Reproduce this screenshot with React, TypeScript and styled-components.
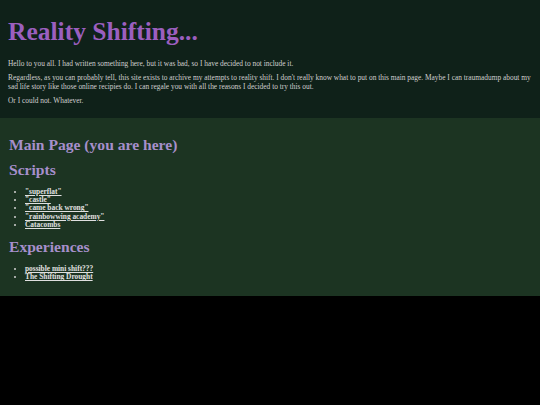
import React from 'react'
import styled, { createGlobalStyle } from 'styled-components'

const GlobalStyle = createGlobalStyle`
  html, body {
    margin: 0;
    padding: 0;
    background: #000;
  }
  body {
    font-family: 'Liberation Serif', 'Times New Roman', serif;
  }
`

const Header = styled.header`
  background: #0f2119;
  padding: 17px 8px 8px;
`

const Title = styled.h1`
  margin: 0 0 12px;
  font-size: 25.5px;
  line-height: 30px;
  font-weight: bold;
  color: #9b5fbf;
`

const Para = styled.p`
  margin: 0 0 5px;
  font-size: 7.4px;
  line-height: 9px;
  color: #cfcfcf;
`

const Main = styled.main`
  background: #1c3422;
  padding: 18px 9px 15px;
`

const Heading = styled.h2<{ $space?: number }>`
  margin: 0 0 ${(p) => p.$space ?? 8}px;
  font-size: 15.6px;
  line-height: 17px;
  font-weight: bold;
  color: #a68fcb;
`

const List = styled.ul`
  margin: 0 0 9px;
  padding-left: 16px;
  font-size: 7.4px;
  line-height: 8.2px;
  color: #d2d2d2;

  &:last-child {
    margin-bottom: 0;
  }
`

const Link = styled.a`
  color: #e0e0e0;
  font-weight: bold;
  text-decoration: underline;
`

const scripts = ['"superflat"', '"castle"', '"came back wrong"', '"rainbowwing academy"', 'Catacombs']
const experiences = ['possible mini shift???', 'The Shifting Drought']

export default function App() {
  return (
    <>
      <GlobalStyle />
      <Header>
        <Title>Reality Shifting...</Title>
        <Para>Hello to you all. I had written something here, but it was bad, so I have decided to not include it.</Para>
        <Para>
          Regardless, as you can probably tell, this site exists to archive my attempts to reality shift. I don't really know
          what to put on this main page. Maybe I can traumadump about my sad life story like those online recipies do. I can
          regale you with all the reasons I decided to try this out.
        </Para>
        <Para>Or I could not. Whatever.</Para>
      </Header>
      <Main>
        <Heading>Main Page (you are here)</Heading>
        <Heading $space={10}>Scripts</Heading>
        <List>
          {scripts.map((s) => (
            <li key={s}>
              <Link href="#">{s}</Link>
            </li>
          ))}
        </List>
        <Heading $space={10}>Experiences</Heading>
        <List>
          {experiences.map((s) => (
            <li key={s}>
              <Link href="#">{s}</Link>
            </li>
          ))}
        </List>
      </Main>
    </>
  )
}
